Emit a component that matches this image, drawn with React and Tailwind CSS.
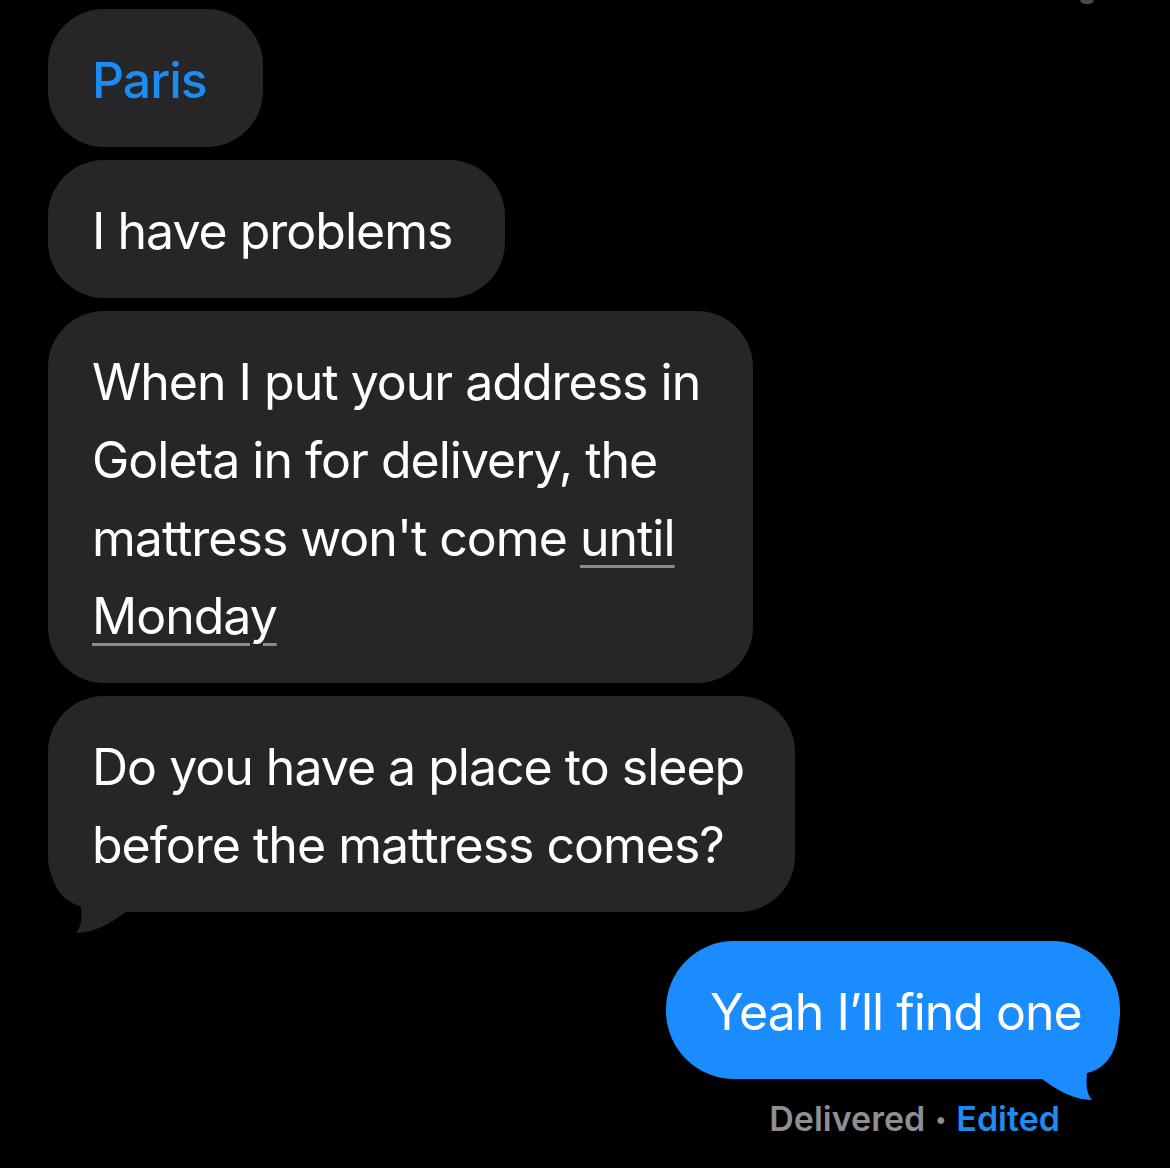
import React from "react";

const FONT = { fontFamily: "Inter, 'Noto Sans', sans-serif" };

const Tail = ({ color, flip }) => (
  <svg
    width="90"
    height="80"
    viewBox="0 0 90 80"
    className={`absolute bottom-[-24px] ${flip ? "right-0 -scale-x-100" : "left-0"}`}
  >
    <path
      d="M1.5 0 C1.5 30 15 46 33 50 C34 60 34 70 28 77 C45 77 62 68 78 56 L90 56 L90 0 Z"
      fill={color}
    />
  </svg>
);

const GrayBubble = ({ width, tail, children }) => (
  <div
    className={`relative ${width} rounded-[56px] bg-[#262629] pl-[44px] pt-[32px] pb-[28px] text-[50px] leading-[78px] tracking-[-0.02em] text-white whitespace-nowrap`}
  >
    {tail && <Tail color="#262629" />}
    <div className="relative z-10">{children}</div>
  </div>
);

const Underlined = ({ children }) => (
  <span className="underline decoration-[#8a8a8f] decoration-[3px] underline-offset-[9px]">{children}</span>
);

export default function App() {
  return (
    <div className="relative min-h-[1168px] w-full overflow-hidden bg-black" style={FONT}>
      <div className="absolute right-[76px] top-[-6px] h-[10px] w-[14px] rounded-full bg-[#4a4a4d]" />

      <div className="flex flex-col items-start gap-[13px] pl-[48px] pt-[9px]">
        <GrayBubble width="w-[215px]">
          <span className="font-medium text-[#1c8cf3]">Paris</span>
        </GrayBubble>
        <GrayBubble width="w-[457px]">I have problems</GrayBubble>
        <GrayBubble width="w-[705px]">
          When I put your address in
          <br />
          Goleta in for delivery, the
          <br />
          mattress won't come <Underlined>until</Underlined>
          <br />
          <Underlined>Monday</Underlined>
        </GrayBubble>
        <GrayBubble width="w-[747px]" tail>
          Do you have a place to sleep
          <br />
          before the mattress comes?
        </GrayBubble>
      </div>

      <div className="mt-[29px] flex flex-col items-end pr-[50px]">
        <div className="relative w-[454px] rounded-[68px] bg-[#1b8cfd] pl-[44px] pt-[32px] pb-[28px] text-[50px] leading-[78px] tracking-[-0.02em] text-white whitespace-nowrap">
          <Tail color="#1b8cfd" flip />
          <div className="relative z-10">Yeah I’ll find one</div>
        </div>
        <div className="mt-[18px] mr-[60px] flex items-center gap-[10px] text-[34px] font-semibold leading-[44px]">
          <span className="text-[#8e8e93]">Delivered</span>
          <span className="text-[22px] text-[#8e8e93]">•</span>
          <span className="text-[#1c8cf3]">Edited</span>
        </div>
      </div>
    </div>
  );
}
